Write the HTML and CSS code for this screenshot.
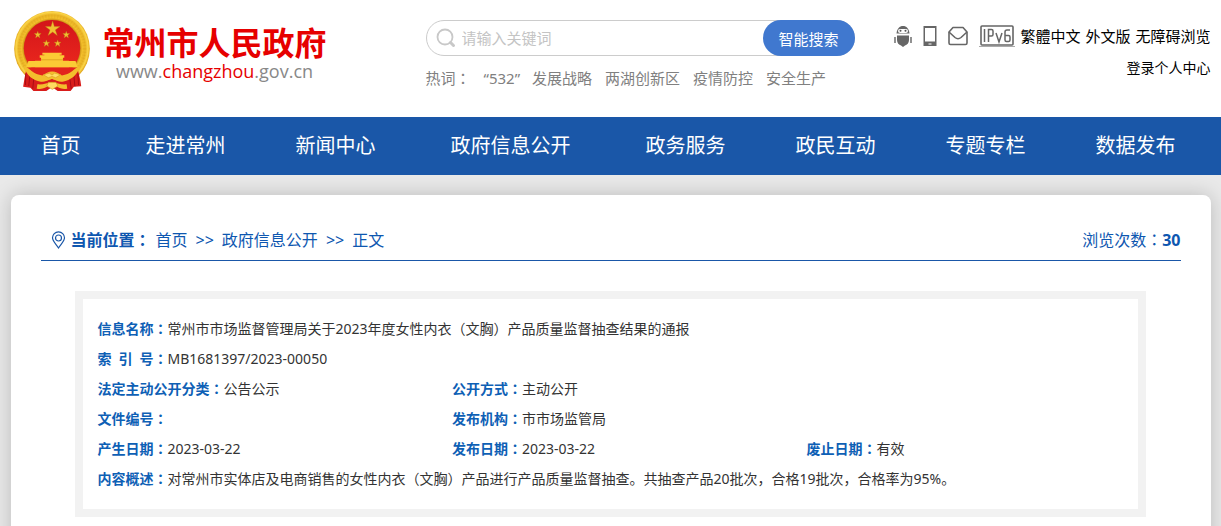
FILE: index.html
```html
<!DOCTYPE html>
<html lang="zh-CN">
<head>
<meta charset="utf-8">
<meta name="viewport" content="width=device-width, initial-scale=1">
<title>常州市人民政府</title>
<link rel="stylesheet" href="styles.css">
</head>
<body>
<header class="header">
  <div class="container header-inner">
    <a class="logo" href="#">
      <svg class="emblem" viewBox="27 17 228 241" aria-hidden="true">
        <defs>
          <radialGradient id="gold" gradientUnits="userSpaceOnUse" cx="141" cy="129" r="114">
            <stop offset="0.74" stop-color="#c88a12"/>
            <stop offset="0.8" stop-color="#f3c02c"/>
            <stop offset="0.88" stop-color="#e9b325"/>
            <stop offset="0.95" stop-color="#fbd548"/>
            <stop offset="1" stop-color="#e0a51c"/>
          </radialGradient>
          <linearGradient id="field" x1="0" y1="0" x2="0" y2="1">
            <stop offset="0" stop-color="#d3151a"/>
            <stop offset="1" stop-color="#ee2a1e"/>
          </linearGradient>
        </defs>
        <ellipse cx="141" cy="131" rx="114" ry="114" fill="url(#gold)"/>
        <circle cx="141" cy="131" r="98" fill="none" stroke="#d79a18" stroke-width="11" stroke-dasharray="3 6" opacity="0.3"/>
        <circle cx="141" cy="129" r="85" fill="url(#field)"/>
        <g fill="#f0c132" stroke="#b98016" stroke-width="1">
          <path d="M143 47l5 17 17 0-14 10 6 17-14-11-14 11 6-17-14-10 17 0z"/>
          <path id="star" d="M98 78l2.500 7 8 0-6 5 2 8-6.500-5-6.500 5 2-8-6-5 8 0z"/>
          <use href="#star" x="86"/>
          <use href="#star" x="26" y="26"/>
          <use href="#star" x="60" y="26"/>
        </g>
        <g fill="#fbcb35">
          <path d="M112 143h58v6h-6v6h-46v-6h-6z"/>
          <path d="M104 150h74v8h-4v9h18v20H90v-20h18v-9h-4z"/>
          <path d="M70 168h142l6 19H63z"/>
        </g>
        <path d="M107 164h68" stroke="#d49419" stroke-width="2"/>
        <path d="M63 187h156l-20 18c-8 5-17 8-26 9l-32-8-32 8c-10-1-19-4-27-9z" fill="#e2241d"/>
        <path d="M64 190c12 23 29 36 50 39l27-7 27 7c22-4 38-16 50-39l9 39 2 15-22 1-10 13h-39l-17-12-17 12H85l-9-10-22-3 4-25z" fill="#d91d1b"/>
        <path d="M62 205l-1 35m13-27-3 30m15-21-3 29m136-46 2 35m-14-27 3 31m-15-21 4 29" stroke="#a90c15" stroke-width="3" fill="none"/>
        <path d="M56 183c17 5 30 27 56 28l14-8c10-5 21-5 31 0l14 8c25-1 38-23 55-28-9 29-29 43-53 47-12 1-21-5-32-9-12 4-21 10-34 9-24-4-43-18-51-47z" fill="#f3be2d"/>
        <path d="M115 209l18-5 8 6 8-6 18 5-15 9-11-4-11 4z" fill="#ffdc62" stroke="#d99e20" stroke-width="2"/>
        <path d="M97 238c17 2 29-4 44-7 15 3 27 9 44 7l2 13c-17 3-28-2-36-10h-20c-8 8-19 13-36 10z" fill="#f3be2d"/>
        <path d="M130 232h23l6 11-17 10-17-10z" fill="#ffdb61" stroke="#d09419" stroke-width="2"/>
      </svg>
      <span class="logo-text">
        <span class="site-name">常州市人民政府</span>
        <span class="site-url">www.<b>changzhou</b>.gov.cn</span>
      </span>
    </a>
    <div class="search">
      <form class="search-box" onsubmit="return false">
        <svg class="search-icon" viewBox="0 0 20 20" aria-hidden="true">
          <circle cx="9" cy="9" r="7.500" fill="none" stroke="#c8c8c8" stroke-width="1.800"/>
          <path d="M14.500 14.500l3 3" stroke="#c8c8c8" stroke-width="3" stroke-linecap="round"/>
        </svg>
        <input class="search-input" type="text" placeholder="请输入关键词" aria-label="请输入关键词">
        <button class="search-button" type="submit">智能搜索</button>
      </form>
      <div class="hot">
        <span class="hot-label">热词<span class="colon" lang="zh-TW">：</span></span>
        <a class="hot-quoted" href="#"><span>“532”</span><span>发展战略</span></a>
        <a href="#">两湖创新区</a>
        <a href="#">疫情防控</a>
        <a href="#">安全生产</a>
      </div>
    </div>
    <div class="tools">
      <div class="tools-row">
        <a class="tool-icon" href="#" aria-label="智能机器人">
          <svg width="18" height="22" viewBox="0 0 18 22">
            <path d="M2.500 8.500C3 3.500 5.500 1 9 1s6 2.500 6.500 7.500z" fill="#666"/>
            <rect x="4" y="4" width="10" height="4" rx="2" fill="#fff"/>
            <circle cx="6.500" cy="5.700" r="1" fill="#555"/><circle cx="11.500" cy="5.700" r="1" fill="#555"/>
            <path d="M3 10.500h12V15c0 3-2 5-4 5.500L9 22l-2-1.500C5 20 3 18 3 15z" fill="#666"/>
            <path d="M1 12v6M17 12v6" stroke="#777" stroke-width="1.600"/>
          </svg>
        </a>
        <a class="tool-icon" href="#" aria-label="手机版">
          <svg width="14" height="22" viewBox="0 0 14 22">
            <path d="M0.500 1h13v20H0.500zM2 3v13.500h10V3z" fill="#666" fill-rule="evenodd"/>
            <path d="M5.500 19h3" stroke="#fff"/>
          </svg>
        </a>
        <a class="tool-icon" href="#" aria-label="邮箱">
          <svg width="20" height="20" viewBox="0 0 20 20" fill="none" stroke="#666" stroke-width="1.600" stroke-linejoin="round">
            <path d="M1 6l4-4.500h10L19 6v11q0 1.500-1.500 1.500h-15Q1 18.500 1 17z"/>
            <path d="M1 6l6 5.500q3 2.500 6 0L19 6"/>
          </svg>
        </a>
        <a class="ipv6" href="#" aria-label="IPv6">
          <svg width="36" height="24" viewBox="0 0 36 24" fill="none" stroke="#666">
            <rect x="2" y="2" width="32" height="19" rx="1" stroke-width="1.600"/>
            <path d="M0 22.500h36" stroke="#aaa"/>
            <path d="M5.500 5v13M9.500 18V5.500h3q1.500 0 1.500 1.500v3.500q0 1.500-1.500 1.500h-3M17 9l3 9 3-9M31 6h-3q-2 0-2 2v8q0 1.500 1.500 1.500h2q1.500 0 1.500-1.500v-3q0-1.500-1.500-1.500H26" stroke-width="1.500"/>
          </svg>
        </a>
        <a href="#">繁體中文</a>
        <a href="#">外文版</a>
        <a href="#">无障碍浏览</a>
      </div>
      <a class="login" href="#">登录个人中心</a>
    </div>
  </div>
</header>
<nav class="nav">
  <div class="container nav-inner">
    <a href="#">首页</a>
    <a href="#">走进常州</a>
    <a href="#">新闻中心</a>
    <a href="#">政府信息公开</a>
    <a href="#">政务服务</a>
    <a href="#">政民互动</a>
    <a href="#">专题专栏</a>
    <a href="#">数据发布</a>
  </div>
</nav>
<main class="container card">
  <div class="location">
    <div class="crumbs">
      <svg class="pin" viewBox="0 0 14 18" fill="none" stroke="#1a57a8" stroke-width="1.200" aria-hidden="true">
        <path d="M7 17C4 12.500 1 10 1 6.800a6 6 0 0 1 12 0C13 10 10 12.500 7 17z"/>
        <circle cx="7" cy="7" r="3"/>
      </svg>
      <strong>当前位置<span class="colon" lang="zh-TW">：</span></strong>
      <span class="trail">
        <a href="#">首页</a>
        <span>&gt;&gt;</span>
        <a href="#">政府信息公开</a>
        <span>&gt;&gt;</span>
        <a href="#">正文</a>
      </span>
    </div>
    <div class="views">浏览次数<span class="colon" lang="zh-TW">：</span><b>30</b></div>
  </div>
  <dl class="info">
    <div class="wide"><dt>信息名称<span class="colon" lang="zh-TW">：</span></dt><dd>常州市市场监督管理局关于2023年度女性内衣（文胸）产品质量监督抽查结果的通报</dd></div>
    <div class="wide"><dt class="spread"><span>索</span><span>引</span><span>号<span class="colon" lang="zh-TW">：</span></span></dt><dd>MB1681397/2023-00050</dd></div>
    <div><dt>法定主动公开分类<span class="colon" lang="zh-TW">：</span></dt><dd>公告公示</dd></div>
    <div class="rest"><dt>公开方式<span class="colon" lang="zh-TW">：</span></dt><dd>主动公开</dd></div>
    <div><dt>文件编号<span class="colon" lang="zh-TW">：</span></dt><dd></dd></div>
    <div class="rest"><dt>发布机构<span class="colon" lang="zh-TW">：</span></dt><dd>市市场监管局</dd></div>
    <div><dt>产生日期<span class="colon" lang="zh-TW">：</span></dt><dd>2023-03-22</dd></div>
    <div><dt>发布日期<span class="colon" lang="zh-TW">：</span></dt><dd>2023-03-22</dd></div>
    <div><dt>废止日期<span class="colon" lang="zh-TW">：</span></dt><dd>有效</dd></div>
    <div class="wide"><dt>内容概述<span class="colon" lang="zh-TW">：</span></dt><dd>对常州市实体店及电商销售的女性内衣（文胸）产品进行产品质量监督抽查。共抽查产品20批次，合格19批次，合格率为95%。</dd></div>
  </dl>
</main>
</body>
</html>
```
FILE: styles.css
```css
* {
  box-sizing: border-box;
}

body {
  margin: 0;
  background: #e9e9e9;
  color: #333;
  font-family: "Noto Sans", "Noto Sans CJK SC", sans-serif;
  font-size: 14px;
  overflow-x: hidden;
}

a {
  color: inherit;
  text-decoration: none;
}

.container {
  width: 100%;
  max-width: 1200px;
  margin: 0 auto;
}

/* Traditional Chinese faces centre the full-width colon */
.colon {
  font-family: "Noto Sans CJK TC", sans-serif;
  line-height: 1;
}

.header {
  background: #fff;
}

.header-inner {
  display: flex;
  min-height: 117px;
}

.logo {
  flex: 0 0 415px;
  display: flex;
  align-items: flex-start;
  gap: 13px;
  padding: 11px 0 0 3px;
}

.emblem {
  width: 76px;
  height: 80px;
}

.logo-text {
  display: flex;
  flex-direction: column;
  align-items: center;
  padding-top: 13px;
}

.site-name {
  color: #e60000;
  font-size: 32px;
  font-weight: 700;
  line-height: 38px;
}

.site-url {
  color: #888;
  font-family: "Open Sans", sans-serif;
  font-size: 18px;
  line-height: 18px;
}

.site-url b {
  color: #e60000;
  font-weight: 400;
}

.search {
  flex: 0 0 429px;
  padding-top: 20px;
}

.search-box {
  display: flex;
  align-items: center;
  height: 36px;
  border: 1px solid #ccc;
  border-radius: 18px;
}

.search-icon {
  flex: none;
  width: 20px;
  height: 20px;
  margin-left: 9px;
}

.search-input {
  flex: 1;
  min-width: 0;
  padding: 0 6px;
  border: 0;
  background: none;
  font: inherit;
  font-size: 15px;
  outline: none;
}

.search-input::placeholder {
  color: #c4c4c4;
}

.search-button {
  width: 92px;
  height: 36px;
  margin-right: -1px;
  padding: 0;
  border: 0;
  border-radius: 18px;
  background: #4078cf;
  color: #fff;
  font: inherit;
  font-size: 15px;
}

.hot {
  display: flex;
  gap: 13px;
  padding-top: 12px;
  color: #808080;
  font-size: 15px;
  line-height: 20px;
  white-space: nowrap;
}

.hot-quoted {
  display: flex;
  gap: 12px;
}

.tools {
  flex: 1;
  display: flex;
  flex-direction: column;
  align-items: flex-end;
  gap: 12px;
  padding-top: 26px;
  color: #000;
  font-size: 15px;
  line-height: 20px;
  white-space: nowrap;
}

.tools-row {
  display: flex;
  align-items: center;
  gap: 5px;
  height: 20px;
}

.tool-icon {
  display: flex;
  margin-right: 6px;
}

.ipv6 {
  display: flex;
}

.login {
  font-size: 14px;
}

.nav {
  background: #1a57a8;
  color: #fff;
  font-size: 20px;
  line-height: 58px;
  text-align: center;
}

.nav-inner {
  display: grid;
  grid-template-columns: 2fr 3fr 3fr 4fr 3fr 3fr 3fr 3fr;
}

.card {
  margin-top: 20px;
  padding: 30px 30px 40px;
  border-radius: 8px;
  background: #fff;
  box-shadow: 0 0 20px rgba(0, 0, 0, 0.2);
}

.location {
  display: flex;
  justify-content: space-between;
  padding: 0 0 5px 10px;
  border-bottom: 1px solid #1a57a8;
  color: #0e57b0;
  font-size: 16px;
  line-height: 30px;
}

.crumbs {
  display: flex;
  align-items: center;
  gap: 5px;
}

.trail {
  display: flex;
  gap: 8px;
}

.pin {
  width: 15px;
  height: 18px;
}

.info {
  display: grid;
  grid-template-columns: 15fr 15fr 14fr;
  margin: 30px 35px 0 34px;
  padding: 15px 0 15px 15px;
  border: 8px solid #f2f2f2;
  line-height: 30px;
}

.info > div {
  display: flex;
}

.info .wide {
  grid-column: 1 / -1;
}

.info .rest {
  grid-column: 2 / -1;
}

.info dt {
  flex: none;
  color: #0e60b5;
  font-weight: 700;
}

.info .spread {
  display: flex;
  justify-content: space-between;
  width: 70px;
}

.info dd {
  margin: 0;
}
```
